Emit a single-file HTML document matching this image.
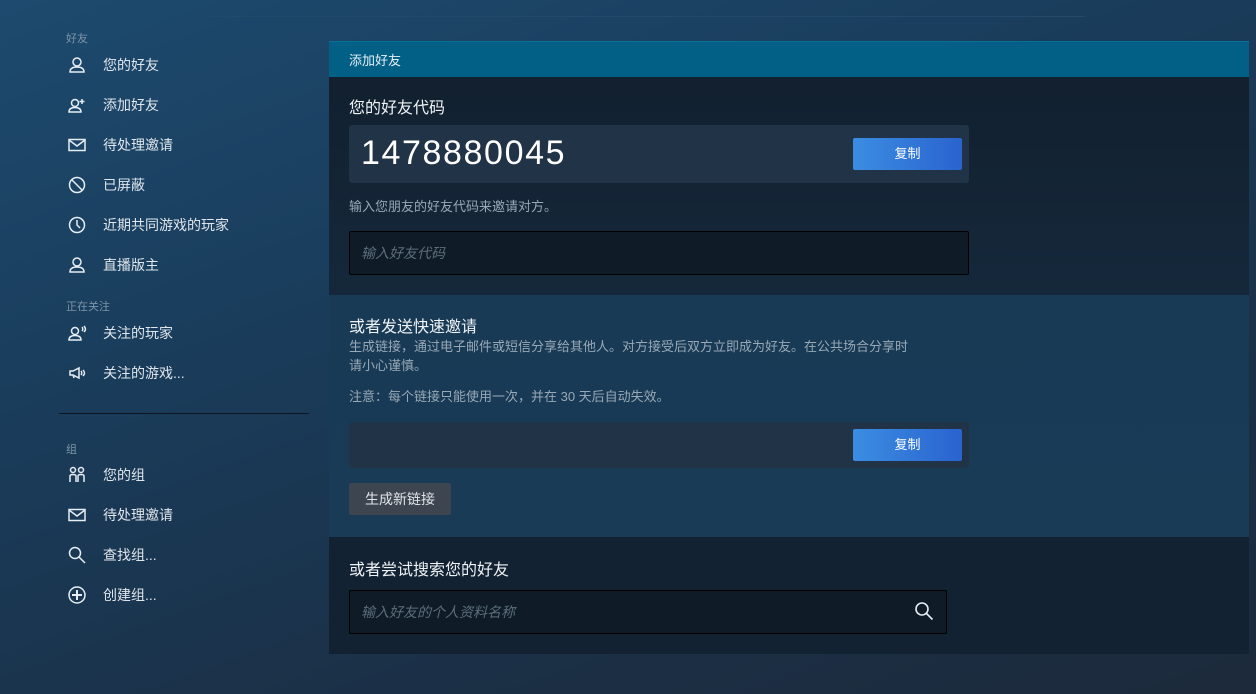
<!DOCTYPE html>
<html><head><meta charset="utf-8"><style>
*{margin:0;padding:0;box-sizing:border-box}
body{width:1256px;height:694px;overflow:hidden;font-family:"Liberation Sans","Noto Sans CJK SC",sans-serif;color:#dfe3e6;
background:linear-gradient(160deg,#1d4a6e 0%,#1a3d5c 35%,#1b2f45 75%,#1c2a3b 100%);position:relative}
.topline{position:absolute;left:210px;top:16px;width:875px;height:1px;background:#23496a}
.cat{position:absolute;left:66px;font-size:11px;color:#7d95a8}
.item{position:absolute;left:67px;height:20px;display:flex;align-items:center;font-size:14px;color:#dfe6ec}
.item svg{width:20px;height:20px;margin-right:16px;fill:none;stroke:#e6eef4;stroke-width:1.5}
.sep{position:absolute;left:59px;top:413px;width:250px;height:1px;background:#0d1520}
.panel{position:absolute;left:329px;top:41px;width:920px}
.hdr{height:36px;background:#025f85;font-size:13px;color:#e6f0f6;padding:8px 20px;border-top:1px solid #0a6f96}
.s1{height:218px;background:linear-gradient(180deg,#12202f,#15283b);position:relative}
.s2{height:242px;background:linear-gradient(180deg,#183a55,#1a3b56);position:relative}
.s3{height:117px;background:#122233;position:relative}
.h{position:absolute;left:20px;font-size:16px;color:#eef2f5}
.box{position:absolute;left:20px;width:620px;background:#213346;border-radius:3px}
.btn{position:absolute;right:7px;width:109px;height:32px;border-radius:2px;background:linear-gradient(90deg,#3b8de2,#2a63cf);color:#fff;font-size:13px;text-align:center;line-height:32px}
.p{position:absolute;left:20px;font-size:13px;color:#97a8b6;line-height:19px}
.inp{position:absolute;left:20px;background:#0f1c28;border:1px solid #000;border-radius:2px;font-size:14px;font-style:italic;color:#5c6d7b;padding-left:11px}
</style></head><body>
<div class="topline"></div>
<div class="cat" style="top:30px">好友</div>
<div class="item" style="top:55px"><svg viewBox="0 0 20 20"><circle cx="10" cy="7" r="4"/><path d="M3 17c0-4 3-5 7-5s7 1 7 5z"/></svg>您的好友</div>
<div class="item" style="top:95px"><svg viewBox="0 0 20 20"><circle cx="8" cy="8" r="3.5"/><path d="M2 17c0-3.5 2.5-4.5 6-4.5s6 1 6 4.5z M15 4v5 M12.5 6.5h5"/></svg>添加好友</div>
<div class="item" style="top:135px"><svg viewBox="0 0 20 20"><rect x="2" y="4.5" width="16" height="11"/><path d="M2 5l8 6 8-6"/></svg>待处理邀请</div>
<div class="item" style="top:175px"><svg viewBox="0 0 20 20"><circle cx="10" cy="10" r="7.5"/><path d="M5 5l10 10"/></svg>已屏蔽</div>
<div class="item" style="top:215px"><svg viewBox="0 0 20 20"><circle cx="10" cy="10" r="7.5"/><path d="M10 5v5l3 3"/></svg>近期共同游戏的玩家</div>
<div class="item" style="top:255px"><svg viewBox="0 0 20 20"><circle cx="10" cy="7" r="4"/><path d="M3 17c0-4 3-5 7-5s7 1 7 5z"/></svg>直播版主</div>
<div class="cat" style="top:298px">正在关注</div>
<div class="item" style="top:323px"><svg viewBox="0 0 20 20"><circle cx="8" cy="8" r="3.5"/><path d="M2 17c0-3.5 2.5-4.5 6-4.5s6 1 6 4.5z M15 4c1 1 1 3 0 4 M17 3c2 2 2 4 0 6"/></svg>关注的玩家</div>
<div class="item" style="top:363px"><svg viewBox="0 0 20 20"><path d="M3 8h3l6-3v10l-6-3H3z M6 12l1 3 M14 8c1 1 1 3 0 4 M16 7c2 2 2 4 0 6"/></svg>关注的游戏...</div>
<div class="sep"></div>
<div class="cat" style="top:441px">组</div>
<div class="item" style="top:465px"><svg viewBox="0 0 20 20"><circle cx="6" cy="5" r="2.5"/><circle cx="14" cy="5" r="2.5"/><path d="M3 17v-6c0-2 6-2 6 0v6 M11 17v-6c0-2 6-2 6 0v6"/></svg>您的组</div>
<div class="item" style="top:505px"><svg viewBox="0 0 20 20"><rect x="2" y="4.5" width="16" height="11"/><path d="M2 5l8 6 8-6"/></svg>待处理邀请</div>
<div class="item" style="top:545px"><svg viewBox="0 0 20 20"><circle cx="8" cy="8" r="5.5"/><path d="M12 12l6 6"/></svg>查找组...</div>
<div class="item" style="top:585px"><svg viewBox="0 0 20 20"><circle cx="10" cy="10" r="8"/><path d="M10 5v10 M5 10h10" stroke-width="2"/></svg>创建组...</div>

<div class="panel">
<div class="hdr">添加好友</div>
<div class="s1">
 <div class="h" style="top:17px">您的好友代码</div>
 <div class="box" style="top:48px;height:58px">
  <div style="position:absolute;left:12px;top:9px;font-size:34px;color:#fff;letter-spacing:1.6px">1478880045</div>
  <div class="btn" style="top:13px">复制</div>
 </div>
 <div class="p" style="top:120px">输入您朋友的好友代码来邀请对方。</div>
 <div class="inp" style="top:154px;width:620px;height:44px;line-height:42px">输入好友代码</div>
</div>
<div class="s2">
 <div class="h" style="top:18px">或者发送快速邀请</div>
 <div class="p" style="top:42px;width:640px;white-space:nowrap">生成链接，通过电子邮件或短信分享给其他人。对方接受后双方立即成为好友。在公共场合分享时<br>请小心谨慎。</div>
 <div class="p" style="top:92px">注意：每个链接只能使用一次，并在 30 天后自动失效。</div>
 <div class="box" style="top:127px;height:46px"><div class="btn" style="top:7px">复制</div></div>
 <div style="position:absolute;left:20px;top:188px;width:102px;height:32px;background:#3d4550;border-radius:2px;font-size:14px;color:#e0e4e8;text-align:center;line-height:32px">生成新链接</div>
</div>
<div class="s3">
 <div class="h" style="top:19px">或者尝试搜索您的好友</div>
 <div class="inp" style="top:53px;width:598px;height:44px;line-height:42px">输入好友的个人资料名称
  <svg style="position:absolute;right:12px;top:10px" width="20" height="20" viewBox="0 0 20 20" fill="none" stroke="#e6eef4" stroke-width="1.6"><circle cx="8" cy="8" r="6"/><path d="M12.5 12.5l6 6"/></svg>
 </div>
</div>
</div>
</body></html>
